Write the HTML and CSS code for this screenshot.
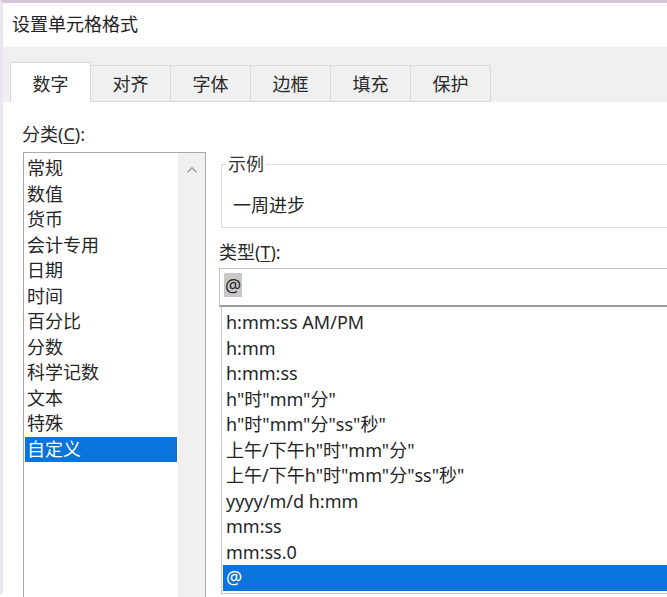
FILE: index.html
```html
<!DOCTYPE html>
<html lang="zh-CN">
<head>
<meta charset="utf-8">
<title>设置单元格格式</title>
<link rel="stylesheet" href="styles.css">
</head>
<body>
<div class="window">
  <div class="titlebar">设置单元格格式</div>
  <div class="tabstrip">
    <div class="tab active">数字</div>
    <div class="tab">对齐</div>
    <div class="tab">字体</div>
    <div class="tab">边框</div>
    <div class="tab">填充</div>
    <div class="tab">保护</div>
  </div>
  <div class="panel">
    <div class="label">分类(<u>C</u>):</div>
    <div class="cols">
      <div class="listbox">
        <ul class="items">
          <li>常规</li>
          <li>数值</li>
          <li>货币</li>
          <li>会计专用</li>
          <li>日期</li>
          <li>时间</li>
          <li>百分比</li>
          <li>分数</li>
          <li>科学记数</li>
          <li>文本</li>
          <li>特殊</li>
          <li class="selected">自定义</li>
        </ul>
        <div class="scrollbar">
          <svg class="arrow" width="12" height="8" viewBox="0 0 12 8"><path d="M1.5 6.5 L6 2 L10.5 6.5" fill="none" stroke="#a6a6a6" stroke-width="1.6"/></svg>
        </div>
      </div>
      <div class="right">
        <fieldset class="sample">
          <legend>示例</legend>
          <div class="sample-text">一周进步</div>
        </fieldset>
        <div class="label type-label">类型(<u>T</u>):</div>
        <div class="input"><span class="sel">@</span></div>
        <ul class="types">
          <li>h:mm:ss AM/PM</li>
          <li>h:mm</li>
          <li>h:mm:ss</li>
          <li>h"时"mm"分"</li>
          <li>h"时"mm"分"ss"秒"</li>
          <li>上午/下午h"时"mm"分"</li>
          <li>上午/下午h"时"mm"分"ss"秒"</li>
          <li>yyyy/m/d h:mm</li>
          <li>mm:ss</li>
          <li>mm:ss.0</li>
          <li class="selected">@</li>
        </ul>
      </div>
    </div>
  </div>
</div>
</body>
</html>
```
FILE: styles.css
```css
html, body {
  margin: 0;
  padding: 0;
}
body {
  width: 667px;
  height: 597px;
  overflow: hidden;
  background: #ffffff;
  font-family: "Noto Sans", "Noto Sans CJK SC", sans-serif;
  font-size: 18px;
  color: #262626;
}
.window {
  border-top: 3px solid #d3c8db;
  border-left: 3px solid #ebe6ee;
  height: 594px;
  box-sizing: border-box;
  background: #ffffff;
}
.titlebar {
  height: 44px;
  padding-left: 9px;
  line-height: 42px;
  color: #222;
  background: #ffffff;
}
.tabstrip {
  height: 55px;
  background: #f0f0f0;
  padding-left: 7px;
  display: flex;
  align-items: flex-end;
}
.tab {
  box-sizing: border-box;
  width: 80px;
  height: 37px;
  border: 1px solid #dadada;
  border-left: none;
  background: #f0f0f0;
  display: flex;
  align-items: center;
  justify-content: center;
  color: #2a2a2a;
  padding-bottom: 1px;
}
.tab.active {
  width: 81px;
  height: 40px;
  border-left: 1px solid #dadada;
  border-bottom: none;
  background: #ffffff;
  padding-bottom: 0;
  padding-top: 1px;
}
.panel {
  padding: 19px 0 0 19px;
}
.label {
  line-height: 26px;
  height: 26px;
  margin-bottom: 5px;
  color: #2a2a2a;
}
.label u {
  text-decoration-thickness: 1px;
  text-underline-offset: 2px;
}
.cols {
  display: flex;
  gap: 13px;
  align-items: flex-start;
}
.listbox {
  margin-left: 1px;
  width: 183px;
  height: 470px;
  box-sizing: border-box;
  border: 1px solid #a9a9a9;
  display: flex;
  background: #ffffff;
  flex: none;
}
.items {
  list-style: none;
  margin: 0 1px 0 1px;
  padding: 3px 0 0 0;
  width: 152px;
}
.items li,
.types li {
  height: 25.5px;
  line-height: 25.5px;
  white-space: nowrap;
}
.items li {
  padding-left: 2px;
}
.items li.selected,
.types li.selected {
  background: #0a74dc;
  color: #ffffff;
}
.scrollbar {
  width: 27px;
  background: #f0f0f0;
  display: flex;
  justify-content: center;
  align-items: flex-start;
  padding-top: 13px;
  box-sizing: border-box;
}
.arrow {
  display: block;
}
.right {
  width: 480px;
  flex: none;
}
.sample {
  margin: 0 0 0 2px;
  border: 1px solid #dddddd;
  padding: 0 11px 9px 11px;
  min-width: 0;
}
.sample legend {
  line-height: 25px;
  padding: 0 2px;
  margin-left: -7px;
  color: #333;
}
.sample-text {
  margin-top: 15.5px;
  line-height: 25px;
  height: 25px;
}
.type-label {
  margin-top: 12px;
  margin-bottom: 3.5px;
  line-height: 25px;
  height: 25px;
}
.input {
  box-sizing: border-box;
  height: 39px;
  border-top: 1px solid #c4c4c4;
  border-left: 1px solid #c4c4c4;
  border-bottom: 2px solid #9c9c9c;
  padding: 4px 0 0 4px;
  display: flex;
  align-items: flex-start;
}
.sel {
  background: #c8c8c8;
  line-height: 24px;
  height: 24px;
  padding: 0 1px;
}
.types {
  list-style: none;
  margin: 0 0 0 2px;
  padding: 3px 0 2px 0;
  border-left: 1px solid #c8c8c8;
  border-bottom: 1px solid #c8c8c8;
}
.types li {
  padding-left: 4px;
}
.types li.selected {
  margin-left: 1px;
  padding-left: 3px;
}
```
